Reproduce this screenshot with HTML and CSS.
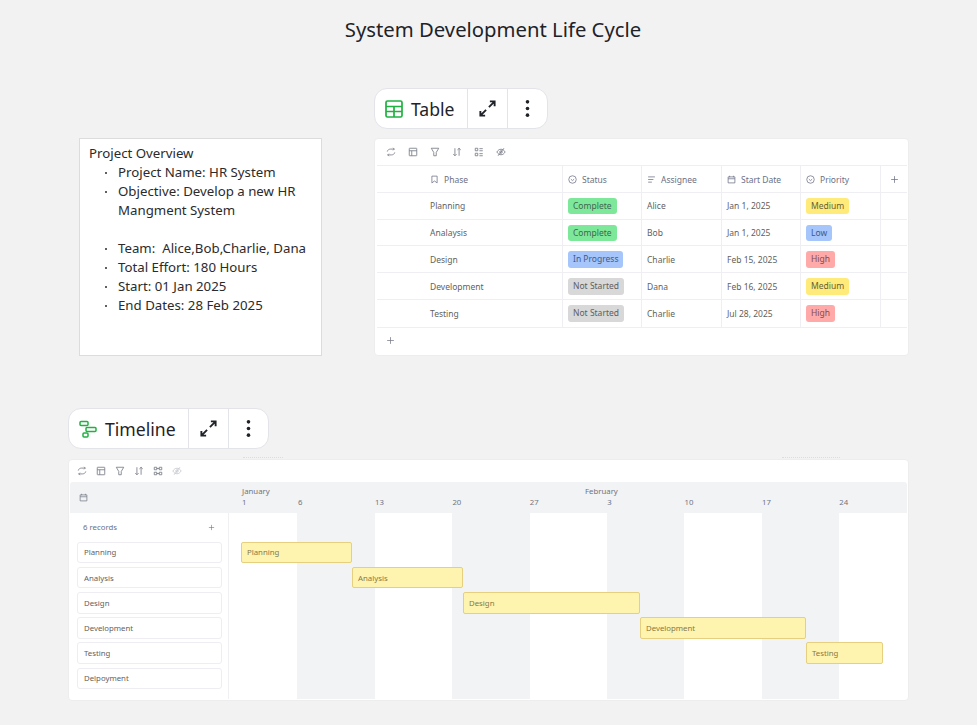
FILE: index.html
```html
<!DOCTYPE html>
<html lang="en">
<head>
  <meta charset="UTF-8">
  <title>System Development Life Cycle</title>
  <link rel="stylesheet" href="styles.css">
</head>
<body>
  <svg class="sprites" width="0" height="0">
    <symbol id="i-expand" viewBox="0 0 20 20"><path d="M11.500 8.500 17.500 2.500M12.500 2.500h5v5M8.500 11.500 2.500 17.500M2.500 12.500v5h5" fill="none" stroke="currentColor" stroke-width="2"/></symbol>
    <symbol id="i-more" viewBox="0 0 20 20"><circle cx="10" cy="3" r="1.900" fill="currentColor"/><circle cx="10" cy="10" r="1.900" fill="currentColor"/><circle cx="10" cy="17" r="1.900" fill="currentColor"/></symbol>
    <symbol id="i-sync" viewBox="0 0 12 12"><path d="M1.500 5.500C2 3.500 3.500 2.500 5.500 2.500H10M8.500 1l1.500 1.500L8.500 4M10.500 6.500C10 8.500 8.500 9.500 6.500 9.500H2M3.500 8 2 9.500 3.500 11" fill="none" stroke="currentColor"/></symbol>
    <symbol id="i-layout" viewBox="0 0 12 12"><path d="M2 1.500h8a.5.5 0 0 1 .5.5v8a.5.5 0 0 1-.5.5H2a.5.5 0 0 1-.5-.5V2a.5.5 0 0 1 .5-.5ZM1.500 4.500h9M4.500 4.500v6" fill="none" stroke="currentColor"/></symbol>
    <symbol id="i-filter" viewBox="0 0 12 12"><path d="M1.500 1.500h9L7.500 6.500v4h-3v-4Z" fill="none" stroke="currentColor"/></symbol>
    <symbol id="i-sort" viewBox="0 0 12 12"><path d="M3.500 1.500v9M1.500 8.500l2 2 2-2M8.500 10.500v-9M6.500 3.500l2-2 2 2" fill="none" stroke="currentColor"/></symbol>
    <symbol id="i-fields" viewBox="0 0 12 12"><path d="M1.500 1.500h3v3h-3ZM1.500 7.500h3v3h-3ZM6.500 2h4M6.500 4.500h4M6.500 8h4M6.500 10.500h4" fill="none" stroke="currentColor"/></symbol>
    <symbol id="i-group" viewBox="0 0 12 12"><path d="M1.500 1.500h3v3h-3ZM7.500 1.500h3v3h-3ZM1.500 7.500h3v3h-3ZM7.500 7.500h3v3h-3ZM4.500 3h3M4.500 9h3" fill="none" stroke="currentColor"/></symbol>
    <symbol id="i-hide" viewBox="0 0 12 12"><path d="M1 6c1.500-2.300 3-3.300 5-3.300s3.500 1 5 3.300c-1.500 2.300-3 3.300-5 3.300S2.500 8.300 1 6ZM2.500 10.500l7-9" fill="none" stroke="currentColor"/><circle cx="6" cy="6" r="1.500" fill="none" stroke="currentColor"/></symbol>
    <symbol id="i-bookmark" viewBox="0 0 12 12"><path d="M2.500 1.500h7v9L6 8l-3.500 2.500Z" fill="none" stroke="currentColor"/></symbol>
    <symbol id="i-select" viewBox="0 0 12 12"><circle cx="6" cy="6" r="5" fill="none" stroke="currentColor"/><path d="M3.800 5.500 6 7.500l2.200-2" fill="none" stroke="currentColor"/></symbol>
    <symbol id="i-text" viewBox="0 0 12 12"><path d="M1.500 2.500h9M1.500 6h7M1.500 9.500h5" fill="none" stroke="currentColor"/></symbol>
    <symbol id="i-date" viewBox="0 0 12 12"><path d="M1.500 2.500h9v8h-9ZM1.500 5h9M3.500 1v2M8.500 1v2" fill="none" stroke="currentColor"/></symbol>
    <symbol id="i-plus" viewBox="0 0 12 12"><path d="M6 1.500v9M1.500 6h9" fill="none" stroke="currentColor"/></symbol>
  </svg>

  <h1 class="board-title">System Development Life Cycle</h1>

  <!-- Note -->
  <div class="note">
    <p>Project Overview</p>
    <ul>
      <li>Project Name: HR System</li>
      <li>Objective: Develop a new HR Mangment System<br>&nbsp;</li>
      <li>Team:&nbsp; Alice,Bob,Charlie, Dana</li>
      <li>Total Effort: 180 Hours</li>
      <li>Start: 01 Jan 2025</li>
      <li>End Dates: 28 Feb 2025</li>
    </ul>
  </div>

  <!-- Table embed -->
  <div class="embed-bar table-bar">
    <div class="embed-name">
      <svg class="embed-icon" viewBox="0 0 18 18"><path d="M2.500 1h13A1.500 1.500 0 0 1 17 2.500v13a1.500 1.500 0 0 1-1.500 1.500h-13A1.500 1.500 0 0 1 1 15.500v-13A1.500 1.500 0 0 1 2.500 1ZM1 6.500h16M1 11.500h16M9 6.500V17" fill="none" stroke="#1fb141" stroke-width="1.700"/></svg>
      <span>Table</span>
    </div>
    <div class="embed-btn"><svg><use href="#i-expand"/></svg></div>
    <div class="embed-btn"><svg><use href="#i-more"/></svg></div>
  </div>

  <div class="card table-card">
    <div class="tools">
      <svg><use href="#i-sync"/></svg>
      <svg><use href="#i-layout"/></svg>
      <svg><use href="#i-filter"/></svg>
      <svg><use href="#i-sort"/></svg>
      <svg><use href="#i-fields"/></svg>
      <svg><use href="#i-hide"/></svg>
    </div>
    <div class="grid">
      <div class="cell head"></div>
      <div class="cell head"><svg><use href="#i-bookmark"/></svg>Phase</div>
      <div class="cell head"><svg><use href="#i-select"/></svg>Status</div>
      <div class="cell head"><svg><use href="#i-text"/></svg>Assignee</div>
      <div class="cell head"><svg><use href="#i-date"/></svg>Start Date</div>
      <div class="cell head"><svg><use href="#i-select"/></svg>Priority</div>
      <div class="cell head add"><svg><use href="#i-plus"/></svg></div>

      <div class="cell"></div>
      <div class="cell">Planning</div>
      <div class="cell"><span class="tag green">Complete</span></div>
      <div class="cell">Alice</div>
      <div class="cell">Jan 1, 2025</div>
      <div class="cell"><span class="tag yellow">Medium</span></div>
      <div class="cell"></div>

      <div class="cell"></div>
      <div class="cell">Analaysis</div>
      <div class="cell"><span class="tag green">Complete</span></div>
      <div class="cell">Bob</div>
      <div class="cell">Jan 1, 2025</div>
      <div class="cell"><span class="tag blue">Low</span></div>
      <div class="cell"></div>

      <div class="cell"></div>
      <div class="cell">Design</div>
      <div class="cell"><span class="tag blue">In Progress</span></div>
      <div class="cell">Charlie</div>
      <div class="cell">Feb 15, 2025</div>
      <div class="cell"><span class="tag red">High</span></div>
      <div class="cell"></div>

      <div class="cell"></div>
      <div class="cell">Development</div>
      <div class="cell"><span class="tag grey">Not Started</span></div>
      <div class="cell">Dana</div>
      <div class="cell">Feb 16, 2025</div>
      <div class="cell"><span class="tag yellow">Medium</span></div>
      <div class="cell"></div>

      <div class="cell"></div>
      <div class="cell">Testing</div>
      <div class="cell"><span class="tag grey">Not Started</span></div>
      <div class="cell">Charlie</div>
      <div class="cell">Jul 28, 2025</div>
      <div class="cell"><span class="tag red">High</span></div>
      <div class="cell"></div>
    </div>
    <div class="add-row"><svg><use href="#i-plus"/></svg></div>
  </div>

  <!-- Timeline embed -->
  <div class="embed-bar timeline-bar">
    <div class="embed-name">
      <svg class="embed-icon" viewBox="0 0 18 18"><rect x="1" y="1.500" width="8" height="4" rx="1" fill="none" stroke="#1fb141" stroke-width="1.500"/><rect x="7" y="7.500" width="10" height="4" rx="1" fill="none" stroke="#1fb141" stroke-width="1.500"/><rect x="4" y="13" width="5" height="4" rx="1" fill="none" stroke="#1fb141" stroke-width="1.500"/></svg>
      <span>Timeline</span>
    </div>
    <div class="embed-btn"><svg><use href="#i-expand"/></svg></div>
    <div class="embed-btn"><svg><use href="#i-more"/></svg></div>
  </div>

  <div class="card timeline-card">
    <div class="tools">
      <svg><use href="#i-sync"/></svg>
      <svg><use href="#i-layout"/></svg>
      <svg><use href="#i-filter"/></svg>
      <svg><use href="#i-sort"/></svg>
      <svg><use href="#i-group"/></svg>
      <svg class="faint"><use href="#i-hide"/></svg>
    </div>
    <div class="tl-head">
      <div class="tl-corner"><svg><use href="#i-date"/></svg></div>
      <div class="tl-dates">
        <div class="months"><span class="jan">January</span><span>February</span></div>
        <div class="days">
          <span class="d1">1</span><span class="d2">6</span><span>13</span><span>20</span><span>27</span><span>3</span><span>10</span><span>17</span><span>24</span>
        </div>
      </div>
    </div>
    <div class="tl-body">
      <div class="records">
        <div class="records-top"><span>6 records</span><svg><use href="#i-plus"/></svg></div>
        <div class="record">Planning</div>
        <div class="record">Analysis</div>
        <div class="record">Design</div>
        <div class="record">Development</div>
        <div class="record">Testing</div>
        <div class="record">Delpoyment</div>
      </div>
      <div class="chart">
        <div class="stripes">
          <i class="w"></i><i></i><i class="w"></i><i></i><i class="w"></i><i></i><i class="w"></i><i></i><i class="w"></i>
        </div>
        <div class="bars">
          <div class="bar b-planning">Planning</div>
          <div class="bar b-analysis">Analysis</div>
          <div class="bar b-design">Design</div>
          <div class="bar b-dev">Development</div>
          <div class="bar b-testing">Testing</div>
        </div>
      </div>
    </div>
  </div>
</body>
</html>
```

FILE: styles.css
```css
html {
	background-color: #f2f2f2;
}

body {
	margin: 0;
	width: 977px;
	height: 725px;
	position: relative;
	overflow: hidden;
	font-family: "Noto Sans", sans-serif;
	color: #1f2329;
}

.sprites {
	position: absolute;
}

.board-title {
	margin: 0;
	padding: 15px 0 0 9px;
	text-align: center;
	font-size: 20.300px;
	line-height: 28px;
	font-weight: 400;
}

/* things on the board */
.note,
.embed-bar,
.card {
	position: absolute;
	box-sizing: border-box;
}

.note {
	left: 79px;
	top: 138px;
	width: 243px;
	height: 218px;
	padding: 5px 9px;
	background: #fff;
	border: 1px solid #dcdcdc;
	font-size: 13.250px;
	line-height: 19px;
	color: #2b2b2b;
}
.note p {
	margin: 0;
}
.note ul {
	margin: 0;
	padding-left: 29px;
	list-style: none;
}
.note li {
	position: relative;
}
.note li::before {
	content: "";
	position: absolute;
	left: -13px;
	top: 9px;
	width: 2px;
	height: 2px;
	border-radius: 50%;
	background: #2b2b2b;
}

.embed-bar {
	display: flex;
	height: 41px;
	background: #fff;
	border: 1px solid #e3e4ea;
	border-radius: 13px;
	font-size: 17.600px;
	color: #1f2329;
}
.table-bar {
	left: 374px;
	top: 88px;
	width: 174px;
}
.timeline-bar {
	left: 68px;
	top: 408px;
	width: 201px;
}
.embed-name {
	flex: 1;
	display: flex;
	align-items: center;
	gap: 8px;
	padding-left: 10px;
}
.embed-icon {
	width: 18px;
	height: 18px;
}
.embed-btn {
	width: 39px;
	display: flex;
	align-items: center;
	justify-content: center;
	border-left: 1px solid #e3e4ea;
}
.embed-btn svg {
	width: 19px;
	height: 19px;
}

.card {
	background: #fff;
	border: 1px solid #ededed;
	border-radius: 4px;
	padding: 0 1px;
}
.table-card {
	left: 374px;
	top: 138px;
	width: 535px;
	height: 218px;
	padding-left: 2px;
}
.timeline-card {
	left: 68px;
	top: 459px;
	width: 841px;
	height: 242px;
}

/* clipped label tops that stick out above the timeline */
.timeline-card::before,
.timeline-card::after {
	content: "";
	position: absolute;
	top: -3px;
	border-top: 1px dotted #dcdcdc;
}
.timeline-card::before {
	left: 174px;
	width: 40px;
}
.timeline-card::after {
	left: 713px;
	width: 58px;
}

.tools {
	display: flex;
	align-items: center;
	gap: 12px;
	height: 26px;
	padding-left: 9px;
	color: #777b86;
}
.tools svg {
	width: 10px;
	height: 10px;
}
.tools .faint {
	color: #c6c8cf;
}

.grid {
	display: grid;
	grid-template-columns: 48px 138px 79px 80px 79px 80px 26px;
	grid-auto-rows: 26.800px;
	border-top: 1px solid #eeeef3;
	border-bottom: 1px solid #eeeef3;
	font-size: 8.500px;
	color: #5f5f5f;
}
.cell {
	box-sizing: border-box;
	display: flex;
	align-items: center;
	padding: 0.600px 0 0 5px;
	border-bottom: 1px solid #eeeef3;
	border-right: 1px solid #eeeef3;
	white-space: nowrap;
}
.cell:nth-child(7n+1) {
	border-right: none;
}
.cell:nth-child(7n) {
	border-right: none;
}
.cell:nth-last-child(-n+7) {
	border-bottom: none;
}
.head {
	color: #6b7085;
	gap: 5px;
}
.head svg {
	width: 9px;
	height: 9px;
}
.head.add {
	justify-content: center;
	padding-left: 0;
}
.tag {
	padding: 0 5px;
	line-height: 16.500px;
	border-radius: 3px;
}
.green { background: #7ee89a; color: #3f6650; }
.yellow { background: #ffeb7a; color: #6a6033; }
.blue { background: #a5c5fb; color: #3f5a88; }
.red { background: #ffa9a9; color: #854c4c; }
.grey { background: #d8d8d8; color: #5f5f5f; }

.add-row {
	display: flex;
	align-items: center;
	height: 25px;
	padding-left: 9px;
	color: #777b86;
}
.add-row svg {
	width: 9px;
	height: 9px;
}

.timeline-card .tools {
	height: 22px;
	gap: 9px;
	padding-left: 7px;
}
.tl-head {
	display: flex;
	height: 31px;
	background: #f2f3f5;
	border-radius: 3px 3px 0 0;
	font-size: 7.800px;
	line-height: 11px;
	color: #71747f;
}
.tl-corner {
	box-sizing: border-box;
	flex: none;
	width: 159px;
	display: flex;
	align-items: center;
	padding-left: 9px;
	color: #777b86;
}
.tl-corner svg {
	width: 9px;
	height: 9px;
}
.tl-dates {
	padding-top: 4px;
	padding-left: 13px;
}
.months {
	display: flex;
}
.months .jan {
	width: 343px;
}
.days {
	display: flex;
}
.days span {
	flex: none;
	width: 77.400px;
}
.days .d1 {
	width: 56px;
}
.days .d2 {
	width: 77px;
}

.tl-body {
	display: flex;
	height: 186px;
}
.records {
	box-sizing: border-box;
	width: 159px;
	padding: 0 6px 0 7px;
	border-right: 1px solid #f0f0f3;
	font-size: 7.800px;
	color: #5f5f5f;
}
.records-top {
	display: flex;
	align-items: center;
	justify-content: space-between;
	height: 28.600px;
	padding: 0 7px 0 6px;
	color: #6b7085;
}
.records-top svg {
	width: 7px;
	height: 7px;
}
.record {
	box-sizing: border-box;
	display: flex;
	align-items: center;
	height: 21.600px;
	margin-bottom: 3.600px;
	padding-left: 6px;
	border: 1px solid #eeeef2;
	border-radius: 3px;
}

.chart {
	flex: 1;
	position: relative;
}
.stripes {
	display: grid;
	grid-template-columns: 68px 78px 77px 78px 77px 77px 78px 77px 1fr;
	height: 100%;
	background: #f2f3f5;
}
.stripes .w {
	background: #fff;
}
.bars {
	position: absolute;
	left: 0;
	right: 0;
	top: 28.600px;
	display: flex;
	flex-direction: column;
	gap: 3.600px;
}
.bar {
	box-sizing: border-box;
	height: 21.600px;
	display: flex;
	align-items: center;
	padding-left: 5px;
	background: #fff3b0;
	border: 1px solid #e6d07f;
	border-radius: 2px;
	font-size: 7.800px;
	color: #857a45;
}
.b-planning { margin-left: 12px; width: 111px; }
.b-analysis { margin-left: 123px; width: 111px; }
.b-design { margin-left: 234px; width: 177px; }
.b-dev { margin-left: 411px; width: 166px; }
.b-testing { margin-left: 577px; width: 77px; }
```
